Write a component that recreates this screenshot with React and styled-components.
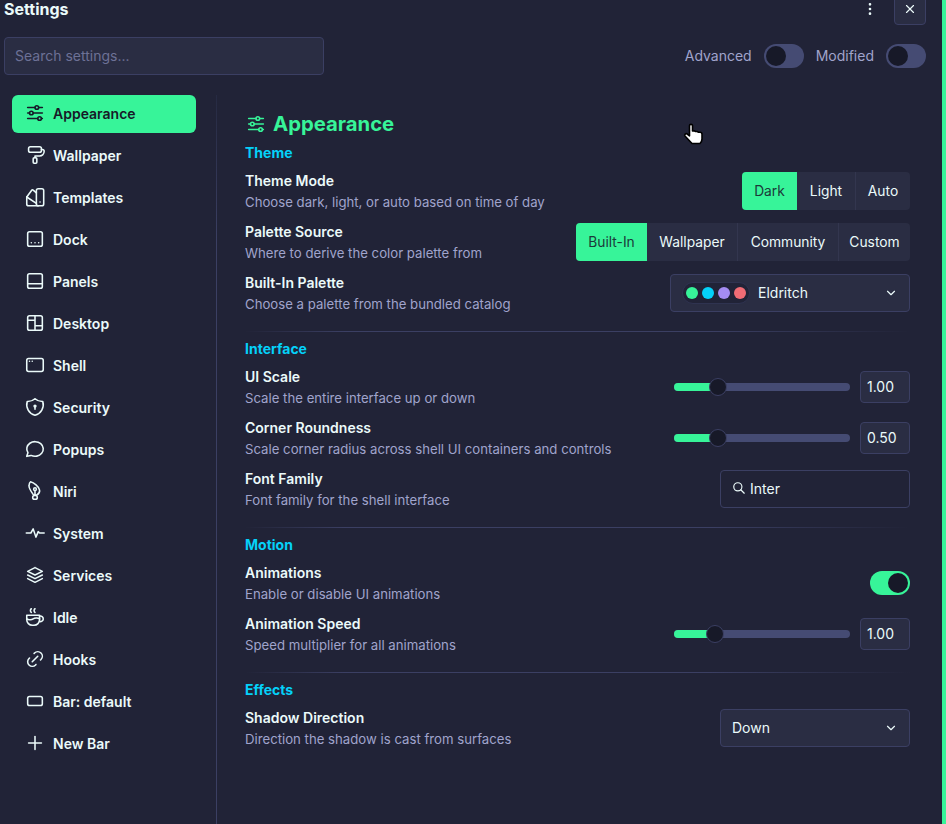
import React from 'react';
import styled, { createGlobalStyle } from 'styled-components';
import {
    TbAdjustmentsHorizontal, TbPaint, TbStack2, TbCoffee, TbLink, TbPlus,
    TbSearch, TbChevronDown, TbDotsVertical, TbX, TbLayoutBottombar, TbAppWindow,
    TbShieldLock, TbMessageCircle,
} from 'react-icons/tb';

const GREEN = '#37f499';
const CYAN = '#04d1f9';
const BG = '#212337';
const SURFACE = '#2a2d43';
const BORDER = '#3b3f63';
const TRACK = '#454b73';
const DARK = '#171928';
const TEXT = '#ebfafa';
const SUB = '#a0a4cc';

const GlobalStyle = createGlobalStyle`
    html, body {
        margin: 0;
        padding: 0;
        background: ${BG};
    }
    * {
        box-sizing: border-box;
    }
`;

const Window = styled.div`
    position: relative;
    width: 946px;
    height: 824px;
    overflow: hidden;
    display: flex;
    flex-direction: column;
    background: ${BG};
    border-right: 4px solid ${GREEN};
    font-family: Inter, "Liberation Sans", sans-serif;
    font-size: 14px;
    color: ${TEXT};
`;

const TitleBar = styled.div`
    display: flex;
    align-items: center;
    height: 32px;
    margin-top: -7px;
    padding: 0 16px 0 4px;
    flex: none;
`;

const Title = styled.div`
    flex: 1;
    font-size: 16px;
    font-weight: 700;
`;

const MenuButton = styled.div`
    width: 32px;
    height: 32px;
    margin-right: 8px;
    display: flex;
    align-items: center;
    justify-content: center;
`;

const CloseButton = styled(MenuButton)`
    margin-right: 0;
    background: ${SURFACE};
    border: 1px solid ${BORDER};
    border-radius: 4px;
`;

const SearchRow = styled.div`
    display: flex;
    align-items: center;
    height: 38px;
    margin-top: 12px;
    padding: 0 16px 0 4px;
    flex: none;
`;

const SearchBox = styled.div`
    width: 320px;
    height: 38px;
    display: flex;
    align-items: center;
    padding: 0 10px 2px;
    background: ${SURFACE};
    border: 1px solid ${BORDER};
    border-radius: 4px;
    color: #6d7196;
`;

const Filters = styled.div`
    margin-left: auto;
    display: flex;
    align-items: center;
    color: ${SUB};
`;

const FilterLabel = styled.span`
    margin: 0 12px;
    padding-bottom: 2px;
`;

const Switch = styled.div`
    width: 40px;
    height: 24px;
    padding: 2px;
    flex: none;
    display: flex;
    justify-content: ${p => (p.$on ? 'flex-end' : 'flex-start')};
    border-radius: 12px;
    background: ${p => (p.$on ? GREEN : TRACK)};
`;

const SwitchKnob = styled.div`
    width: 20px;
    height: 20px;
    border-radius: 50%;
    background: ${DARK};
`;

const Body = styled.div`
    flex: 1;
    min-height: 0;
    display: flex;
    margin-top: 20px;
`;

const Sidebar = styled.nav`
    width: 217px;
    flex: none;
    padding: 0 20px 0 12px;
    border-right: 1px solid;
    border-image: linear-gradient(to bottom, #262a42, ${BORDER} 20%) 1;
    display: flex;
    flex-direction: column;
    gap: 4px;
`;

const NavItem = styled.div`
    height: 38px;
    flex: none;
    display: flex;
    align-items: center;
    gap: 7px;
    padding: 0 0 2px 12px;
    border-radius: 6px;
    font-weight: 600;
    background: ${p => (p.$active ? GREEN : 'transparent')};
    color: ${p => (p.$active ? DARK : TEXT)};
    svg {
        flex: none;
        stroke-width: 1.7;
    }
`;

const Main = styled.main`
    flex: 1;
    min-width: 0;
    padding: 17px 32px 0 28px;
`;

const PageTitle = styled.h1`
    margin: 0 0 8px;
    height: 24px;
    padding-bottom: 2px;
    display: flex;
    align-items: center;
    gap: 6px;
    font-size: 20.3px;
    font-weight: 700;
    color: ${GREEN};
    svg {
        margin-top: 2px;
        stroke-width: 1.7;
    }
`;

const Section = styled.section`
    display: flex;
    flex-direction: column;
    gap: 9px;
`;

const SectionTitle = styled.h2`
    margin: 0 0 -1px;
    height: 18px;
    line-height: 18px;
    font-size: 14px;
    font-weight: 700;
    color: ${CYAN};
`;

const Divider = styled.div`
    height: 1px;
    margin: 17px 0 8px;
    background: linear-gradient(to right, transparent, ${BORDER} 15%, ${BORDER} 70%, transparent);
`;

const Row = styled.div`
    height: 42px;
    display: flex;
    align-items: center;
    justify-content: space-between;
`;

const RowText = styled.div`
    line-height: 21px;
`;

const RowLabel = styled.div`
    font-weight: 600;
`;

const RowHint = styled.div`
    margin: 1px 0 -1px;
    font-size: 13.2px;
    color: ${SUB};
`;

const Segments = styled.div`
    height: 38px;
    display: flex;
    font-size: 13.8px;
    background: ${SURFACE};
    border-radius: 4px;
    overflow: hidden;
`;

const Segment = styled.div`
    width: ${p => p.$width}px;
    display: flex;
    align-items: center;
    justify-content: center;
    background: ${p => (p.$active ? GREEN : 'transparent')};
    color: ${p => (p.$active ? '#1c3a3a' : TEXT)};
    border-left: ${p => (p.$separated ? '1px solid #33364f' : 'none')};
`;

const Select = styled.div`
    width: ${p => p.$width}px;
    height: 38px;
    display: flex;
    align-items: center;
    justify-content: space-between;
    padding: 0 11px;
    background: ${SURFACE};
    border: 1px solid ${BORDER};
    border-radius: 4px;
`;

const SelectValue = styled.div`
    display: flex;
    align-items: center;
    gap: 8px;
    padding-bottom: 2px;
`;

const Swatches = styled.div`
    height: 22px;
    margin-bottom: -2px;
    padding: 0 3px;
    display: flex;
    align-items: center;
    gap: 4px;
    border-radius: 11px;
    background: ${BG};
    border: 1px solid #2f3350;
`;

const Swatch = styled.div`
    width: 12px;
    height: 12px;
    border-radius: 50%;
    background: ${p => p.$color};
`;

const SliderGroup = styled.div`
    display: flex;
    align-items: center;
    gap: 10px;
`;

const Track = styled.div`
    position: relative;
    width: 176px;
    height: 8px;
    border-radius: 4px;
    background: ${TRACK};
`;

const TrackFill = styled.div`
    height: 100%;
    border-radius: 4px;
    background: ${GREEN};
`;

const Thumb = styled.div`
    position: absolute;
    top: 50%;
    width: 18px;
    height: 18px;
    transform: translate(-50%, -50%);
    border-radius: 50%;
    background: ${DARK};
    border: 1px solid ${BORDER};
`;

const NumberBox = styled.div`
    width: 50px;
    height: 32px;
    display: flex;
    align-items: center;
    padding: 0 0 2px 6px;
    background: ${SURFACE};
    border: 1px solid ${BORDER};
    border-radius: 4px;
`;

const FontInput = styled.div`
    width: 190px;
    height: 38px;
    display: flex;
    align-items: center;
    gap: 4px;
    padding: 0 0 2px 11px;
    border: 1px solid ${BORDER};
    border-radius: 4px;
`;

const Cursor = styled.svg`
    position: absolute;
    left: 683px;
    top: 123px;
`;

// icons that the tabler set doesn't have in this shape
const Glyph = ({ children, size = 22 }) => (
    <svg width={size} height={size} viewBox="0 0 24 24" fill="none" stroke="currentColor" strokeLinecap="round" strokeLinejoin="round">
        {children}
    </svg>
);

const TemplatesIcon = () => (
    <Glyph>
        <rect x="13.500" y="3" width="8" height="18.500" rx="2" />
        <path d="M17.500 17.500h.01" />
        <path d="M13.500 7.500L10 4.500c-.6-.5-1.200-.4-1.600.1L3 12" />
        <path d="M3 12v7.500a2 2 0 0 0 2 2h11" />
        <path d="M3 12l10.500 7" />
    </Glyph>
);

const DockIcon = () => (
    <Glyph>
        <rect x="4" y="4" width="16" height="16" rx="2" />
        <path d="M8 16h.01M12 16h.01M16 16h.01" />
    </Glyph>
);

const DesktopIcon = () => (
    <Glyph>
        <rect x="4" y="4" width="16" height="16" rx="2" />
        <path d="M12 4v16M4 9h8M12 15h8" />
    </Glyph>
);

const NiriIcon = () => (
    <Glyph>
        <path d="M7 2c4 1 9 5 10 9 .5 2-1 4-3 5.500h-3.500C8 13 5 9 5.500 6 5.700 4 6 2.500 7 2z" />
        <circle cx="12" cy="10" r="1.500" />
        <path d="M12 11.500v5" />
        <rect x="9.500" y="17" width="5" height="4" rx="2" />
    </Glyph>
);

const SystemIcon = () => (
    <Glyph>
        <path d="M2.500 12h5l2.500-4.500 3 9 2.500-6 1.500 1.500h5" />
    </Glyph>
);

const BarIcon = () => (
    <Glyph>
        <rect x="4" y="7" width="16" height="10" rx="2" />
    </Glyph>
);

const navItems = [
    { label: 'Appearance', icon: <TbAdjustmentsHorizontal size={22} />, active: true },
    { label: 'Wallpaper', icon: <TbPaint size={22} /> },
    { label: 'Templates', icon: <TemplatesIcon /> },
    { label: 'Dock', icon: <DockIcon /> },
    { label: 'Panels', icon: <TbLayoutBottombar size={22} /> },
    { label: 'Desktop', icon: <DesktopIcon /> },
    { label: 'Shell', icon: <TbAppWindow size={22} /> },
    { label: 'Security', icon: <TbShieldLock size={22} /> },
    { label: 'Popups', icon: <TbMessageCircle size={22} /> },
    { label: 'Niri', icon: <NiriIcon /> },
    { label: 'System', icon: <SystemIcon /> },
    { label: 'Services', icon: <TbStack2 size={22} /> },
    { label: 'Idle', icon: <TbCoffee size={22} /> },
    { label: 'Hooks', icon: <TbLink size={22} /> },
    { label: 'Bar: default', icon: <BarIcon /> },
    { label: 'New Bar', icon: <TbPlus size={22} /> },
];

const themeModes = [
    { label: 'Dark', width: 55 },
    { label: 'Light', width: 58 },
    { label: 'Auto', width: 55 },
];

const paletteSources = [
    { label: 'Built-In', width: 71 },
    { label: 'Wallpaper', width: 90 },
    { label: 'Community', width: 101 },
    { label: 'Custom', width: 72 },
];

const SegmentedControl = ({ options, active }) => (
    <Segments>
        {options.map((option, i) => (
            <Segment
                key={option.label}
                $width={option.width}
                $active={option.label === active}
                $separated={i > 1}
            >
                {option.label}
            </Segment>
        ))}
    </Segments>
);

const Slider = ({ position, value }) => (
    <SliderGroup>
        <Track>
            <TrackFill style={{ width: position }} />
            <Thumb style={{ left: position }} />
        </Track>
        <NumberBox>{value}</NumberBox>
    </SliderGroup>
);

const SettingRow = ({ label, hint, children }) => (
    <Row>
        <RowText>
            <RowLabel>{label}</RowLabel>
            <RowHint>{hint}</RowHint>
        </RowText>
        {children}
    </Row>
);

const App = () => {
    return (
        <Window>
            <GlobalStyle />
            <TitleBar>
                <Title>Settings</Title>
                <MenuButton><TbDotsVertical size={16} /></MenuButton>
                <CloseButton><TbX size={14} /></CloseButton>
            </TitleBar>
            <SearchRow>
                <SearchBox>Search settings...</SearchBox>
                <Filters>
                    <FilterLabel>Advanced</FilterLabel>
                    <Switch><SwitchKnob /></Switch>
                    <FilterLabel>Modified</FilterLabel>
                    <Switch><SwitchKnob /></Switch>
                </Filters>
            </SearchRow>
            <Body>
                <Sidebar>
                    {navItems.map(item => (
                        <NavItem key={item.label} $active={item.active}>
                            {item.icon}
                            {item.label}
                        </NavItem>
                    ))}
                </Sidebar>
                <Main>
                    <PageTitle><TbAdjustmentsHorizontal size={22} />Appearance</PageTitle>
                    <Section>
                        <SectionTitle>Theme</SectionTitle>
                        <SettingRow label="Theme Mode" hint="Choose dark, light, or auto based on time of day">
                            <SegmentedControl options={themeModes} active="Dark" />
                        </SettingRow>
                        <SettingRow label="Palette Source" hint="Where to derive the color palette from">
                            <SegmentedControl options={paletteSources} active="Built-In" />
                        </SettingRow>
                        <SettingRow label="Built-In Palette" hint="Choose a palette from the bundled catalog">
                            <Select $width={240}>
                                <SelectValue>
                                    <Swatches>
                                        {[GREEN, CYAN, '#a48cf2', '#f16c75'].map(color => <Swatch key={color} $color={color} />)}
                                    </Swatches>
                                    Eldritch
                                </SelectValue>
                                <TbChevronDown size={14} />
                            </Select>
                        </SettingRow>
                    </Section>
                    <Divider />
                    <Section>
                        <SectionTitle>Interface</SectionTitle>
                        <SettingRow label="UI Scale" hint="Scale the entire interface up or down">
                            <Slider position="44px" value="1.00" />
                        </SettingRow>
                        <SettingRow label="Corner Roundness" hint="Scale corner radius across shell UI containers and controls">
                            <Slider position="44px" value="0.50" />
                        </SettingRow>
                        <SettingRow label="Font Family" hint="Font family for the shell interface">
                            <FontInput><TbSearch size={14} />Inter</FontInput>
                        </SettingRow>
                    </Section>
                    <Divider />
                    <Section>
                        <SectionTitle>Motion</SectionTitle>
                        <SettingRow label="Animations" hint="Enable or disable UI animations">
                            <Switch $on><SwitchKnob /></Switch>
                        </SettingRow>
                        <SettingRow label="Animation Speed" hint="Speed multiplier for all animations">
                            <Slider position="41px" value="1.00" />
                        </SettingRow>
                    </Section>
                    <Divider />
                    <Section>
                        <SectionTitle>Effects</SectionTitle>
                        <SettingRow label="Shadow Direction" hint="Direction the shadow is cast from surfaces">
                            <Select $width={190}>
                                <SelectValue>Down</SelectValue>
                                <TbChevronDown size={14} />
                            </Select>
                        </SettingRow>
                    </Section>
                </Main>
            </Body>
            <Cursor width="22" height="24" viewBox="0 0 22 24">
                <path
                    d="M6.500 2.500c0-1.500 3-1.500 3 0V8h1c1-.3 1.500 0 2 .5h1.500c.5 0 1 .3 1.200.8H17c1.200 0 2 .8 2 2V16c0 2-1 3.500-2 4.500H9l-7-7.500c-1-1.200.8-3 2.200-2l2.300 1.800z"
                    fill="#fff"
                    stroke="#000"
                    strokeWidth="1.600"
                    strokeLinejoin="round"
                />
            </Cursor>
        </Window>
    );
};

export default App;
